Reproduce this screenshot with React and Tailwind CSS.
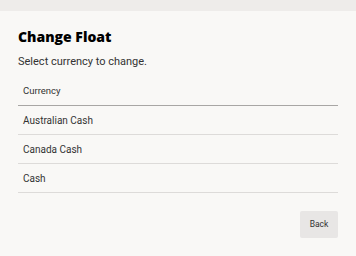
import React from "react";

export default function App() {
	const rows = ["Australian Cash", "Canada Cash", "Cash"];

	return (
		<div
			className="w-[356px] h-[256px] bg-[#f9f8f6] flex flex-col overflow-hidden"
			style={{ fontFamily: 'Roboto, "Open Sans", sans-serif' }}
		>
			{/* top strip */}
			<div className="h-[11px] bg-[#eeecea]" />

			<div className="px-[18px] pt-[15px] flex flex-col">
				<h1
					className="text-[14px] leading-[22px] font-extrabold text-black"
					style={{ fontFamily: '"Open Sans", "Noto Sans", sans-serif' }}
				>
					Change Float
				</h1>
				<p className="mt-[6px] text-[11px] leading-[16px] text-[#333]">
					Select currency to change.
				</p>

				{/* table */}
				<div className="mt-[7px] flex flex-col">
					<div className="h-[29px] flex items-center px-[5px] border-b border-[#a8a6a4] text-[9.5px] text-[#333]">
						Currency
					</div>
					{rows.map((r, i) => (
						<div
							key={i}
							className="h-[29px] flex items-center px-[5px] border-b border-[#dddbd9] text-[10px] text-[#333]"
						>
							{r}
						</div>
					))}
				</div>

				<div className="flex justify-end mt-[18px]">
					<button className="w-[38px] h-[27px] rounded-[2px] bg-[#e8e6e5] text-[8.5px] text-[#333]">
						Back
					</button>
				</div>
			</div>
		</div>
	);
}
